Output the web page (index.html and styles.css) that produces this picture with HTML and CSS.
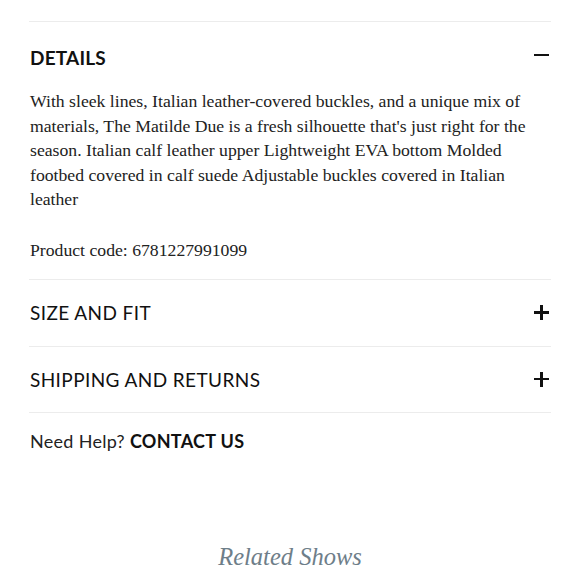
FILE: index.html
```html
<!DOCTYPE html>
<html>
<head>
<meta charset="utf-8">
<link rel="stylesheet" href="styles.css">
</head>
<body>
<div class="page">
  <div class="accordion">
    <section class="item open">
      <div class="head first">
        <h3 class="title bold">DETAILS</h3>
        <span class="icon minus"></span>
      </div>
      <div class="body">
        <p>With sleek lines, Italian leather-covered buckles, and a unique mix of materials, The Matilde Due is a fresh silhouette that's just right for the season. Italian calf leather upper Lightweight EVA bottom Molded footbed covered in calf suede Adjustable buckles covered in Italian leather</p>
        <p class="code">Product code: 6781227991099</p>
      </div>
    </section>
    <section class="item">
      <div class="head">
        <h3 class="title">SIZE AND FIT</h3>
        <span class="icon plus"></span>
      </div>
    </section>
    <section class="item">
      <div class="head">
        <h3 class="title">SHIPPING AND RETURNS</h3>
        <span class="icon plus"></span>
      </div>
    </section>
  </div>
  <p class="help">Need Help? <a class="contact" href="#">CONTACT US</a></p>
  <h2 class="related">Related Shows</h2>
</div>
</body>
</html>
```
FILE: styles.css
```css
html, body {
  margin: 0;
  padding: 0;
  background: #fff;
}
.page {
  padding: 21px 29px 0 29px;
  color: #1a1a1a;
}
.accordion {
  border-top: 1px solid #ececec;
}
.item {
  border-bottom: 1px solid #ececec;
}
.head {
  display: flex;
  justify-content: space-between;
  align-items: center;
  height: 65.5px;
  padding: 0 2px 0 1px;
}
.head.first {
  height: 64px;
  padding-top: 3px;
}
.title {
  margin: 0;
  font-family: "Lato", "DejaVu Sans", sans-serif;
  font-size: 19px;
  font-weight: 400;
  color: #111;
  letter-spacing: 0.4px;
}
.title.bold {
  font-weight: 700;
  letter-spacing: 0.2px;
}
.icon {
  position: relative;
  width: 15px;
  height: 15px;
}
.icon::before, .plus::after {
  content: "";
  position: absolute;
  background: #111;
}
.icon::before {
  left: 0;
  top: 6px;
  width: 15px;
  height: 2.6px;
}
.plus::after {
  left: 6.2px;
  top: 0;
  width: 2.6px;
  height: 15px;
}
.head .minus { top: -2px; }
.body {
  padding: 0 0 17px 1px;
  font-family: "Liberation Serif", serif;
  font-size: 17.7px;
  line-height: 24.5px;
  color: #222;
}
.body p {
  margin: 0;
}
.body .code {
  margin-top: 26px;
}
.help {
  margin: 17px 0 0 1px;
  font-family: "Lato", "DejaVu Sans", sans-serif;
  font-size: 18px;
  letter-spacing: 0.3px;
  color: #222;
}
.contact {
  color: #111;
  font-weight: 700;
  text-decoration: none;
}
.related {
  margin: 91px 0 0 0;
  text-align: center;
  font-family: "Liberation Serif", serif;
  font-style: italic;
  font-weight: 400;
  font-size: 24.5px;
  color: #6e7e89;
}
```
